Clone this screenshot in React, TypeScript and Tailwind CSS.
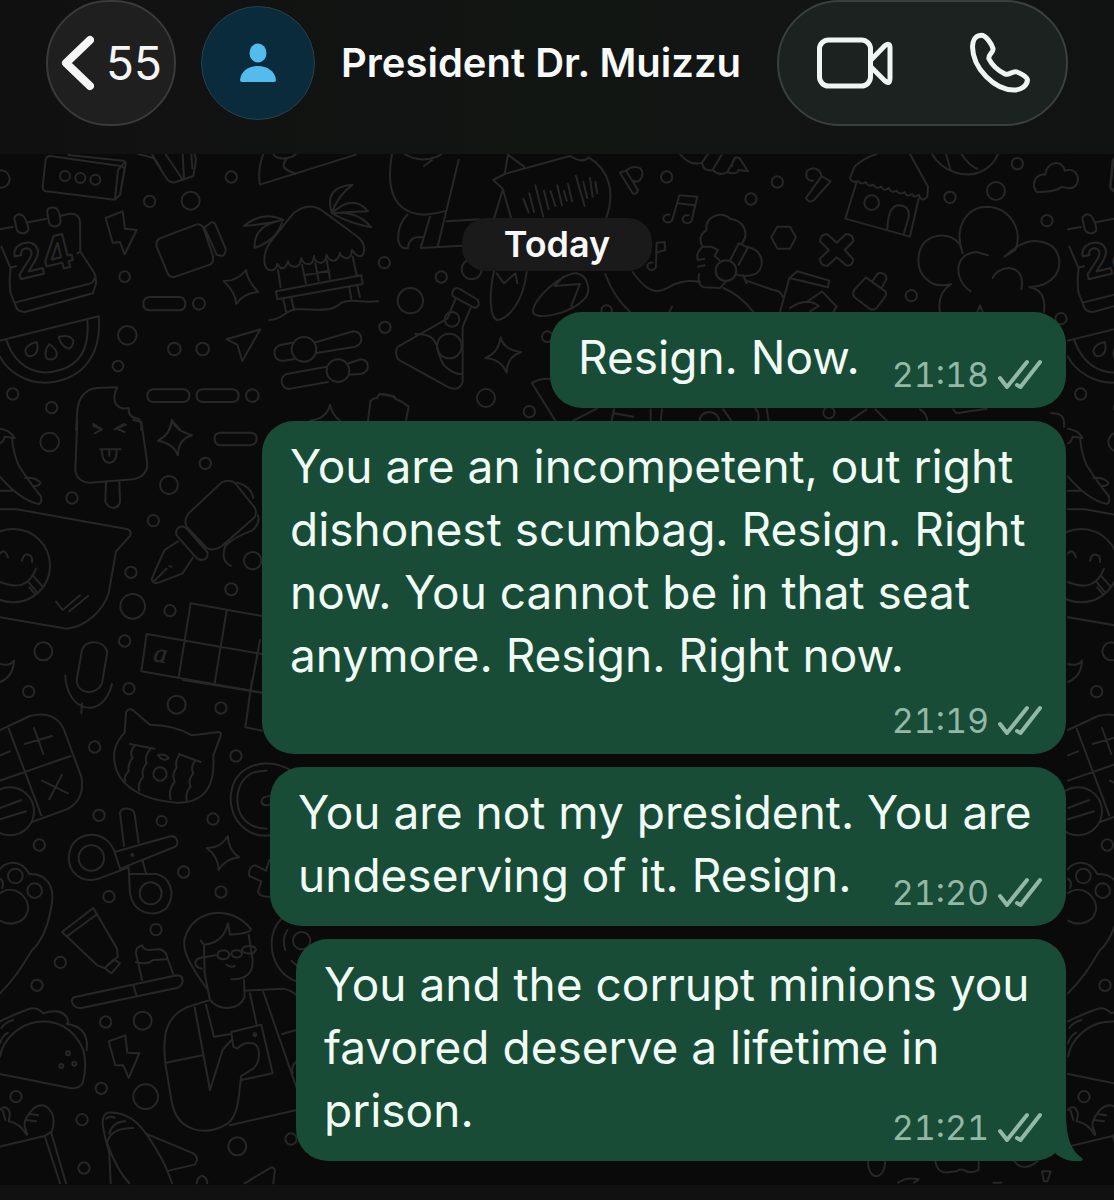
import type { ReactNode } from "react";

interface Message {
  id: number;
  text: string;
  time: string;
  width: string;
  /** Time drops to a row of its own below the text. */
  timeBelow?: boolean;
}

const MESSAGES: Message[] = [
  { id: 1, text: "Resign. Now.", time: "21:18", width: "w-[516px]" },
  {
    id: 2,
    text: "You are an incompetent, out right dishonest scumbag. Resign. Right now. You cannot be in that seat anymore. Resign. Right now.",
    time: "21:19",
    width: "w-[804px]",
    timeBelow: true,
  },
  {
    id: 3,
    text: "You are not my president. You are undeserving of it. Resign.",
    time: "21:20",
    width: "w-[796px]",
  },
  {
    id: 4,
    text: "You and the corrupt minions you favored deserve a lifetime in prison.",
    time: "21:21",
    width: "w-[770px]",
  },
];

type Dot = [number, number, number];

interface DoodlesProps {
  x: number;
  y: number;
  dots: Dot[];
  paths: string[];
  children?: ReactNode;
}

/** One patch of the wallpaper, drawn at three times its final size. */
function Doodles({ x, y, dots, paths, children }: DoodlesProps) {
  return (
    <g transform={`translate(${x} ${y}) scale(0.3333)`}>
      {dots.map(([cx, cy, r]) => (
        <circle key={`${cx}-${cy}`} cx={cx} cy={cy} r={r} />
      ))}
      {paths.map((d) => (
        <path key={d} d={d} />
      ))}
      {children}
    </g>
  );
}

function Wallpaper() {
  return (
    <svg
      aria-hidden="true"
      className="absolute inset-0 h-full w-full"
      fill="none"
      stroke="#272727"
      strokeWidth={6}
      strokeLinecap="round"
      strokeLinejoin="round"
    >
      <g transform="translate(0 -154)">
        <g id="doodle-tile">
          <Doodles
            x={0}
            y={150}
            dots={[
              [195, 78, 15], [241, 84, 15], [286, 89, 15],
              [449, 154, 17], [572, 152, 27], [694, 81, 17], [374, 380, 16],
              [597, 461, 18], [1153, 338, 17], [1155, 532, 17], [382, 556, 28],
              [523, 597, 19], [608, 597, 19], [354, 648, 16], [38, 732, 17],
              [155, 773, 17], [757, 737, 19], [912, 598, 37], [1014, 662, 34],
            ]}
            paths={[
              // long box
              "M150 18L362 48Q374 51 373 60L360 135L344 149L139 124Q127 122 128 110L137 28Q139 18 150 18ZM205 15L370 32Q378 34 377 42L360 135M345 148L354 60L373 38",
              "M415 12L460 24L503 90Q514 100 528 96L580 78L588 30L584 12M456 12L482 55M496 12L549 90M548 12L552 88M574 12L577 55",
              "M790 12Q772 60 780 104L1068 14M820 12Q830 30 862 24Q840 50 862 60L886 72M862 24Q880 22 888 12",
              // calendar
              "M0 238L38 231M84 217L140 206M182 197L210 191Q238 190 240 215L241 305L276 358Q292 380 287 405L278 430L75 486Q50 486 46 465L32 430Q26 400 32 355L4 290M34 352L48 349M232 310L241 305M44 458L265 402Q280 400 284 385",
              "M45 214C38 195 58 188 70 198C80 212 88 235 84 242C76 254 56 252 50 238ZM142 190C138 174 156 168 170 176C180 186 184 212 180 222C172 232 156 232 148 220Z",
              // bolts and sparks
              "M317 204L368 184L375 236L410 240L374 313L360 276L338 278Z",
              "M738 360Q742 392 775 426Q732 428 709 462Q706 425 671 393Q712 394 738 360Z",
              // camcorder
              "M478 266L590 223Q606 222 611 236L638 315Q644 336 630 344L526 380Q508 384 502 368L470 290Q467 274 478 266ZM613 232L636 216Q646 218 649 230L677 296Q678 312 668 318L650 314Z",
              "M448 441H538Q556 443 556 461T538 481H448Q430 479 430 461T448 441ZM460 718H550Q568 720 568 737T550 756H460Q442 754 442 737T460 718ZM608 718H698Q716 720 716 737T698 756H608Q590 754 590 737T608 718Z",
              // beach hut
              "M794 340Q788 300 824 260L880 190Q930 150 975 188L1070 258Q1100 280 1090 312Q1082 326 1066 312L1056 300Q1054 328 1036 324Q1022 320 1020 308Q1014 334 998 332Q982 328 980 314Q976 340 962 338Q944 338 942 318Q940 344 924 342Q908 342 904 324Q900 352 884 350Q868 350 864 334Q858 358 842 354L832 342Q828 364 808 360Q796 356 794 340",
              "M850 210Q790 180 732 228Q790 224 850 210Q760 224 764 294Q830 270 846 218M996 190Q970 110 1058 104Q1010 140 996 190Q1060 130 1104 184Q1050 186 996 190Q1070 180 1114 232Q1050 220 996 190",
              "M834 360L842 412M1058 320L1070 376M906 344L918 400M946 340L956 392M980 330L990 386M912 376L988 362M828 424L1084 376L1088 402L832 448ZM850 448L858 484M874 444L882 480M1048 412L1054 446M1072 406L1080 442M808 510C850 510 850 482 890 478C950 476 990 490 1024 458C1060 444 1070 460 1134 454",
              // melon slice
              "M0 572L296 499C306 600 260 680 160 696C80 708 20 660 0 620M18 568C50 660 120 680 180 660C250 640 268 580 262 510M110 576Q118 600 104 614Q80 628 76 602Q80 582 110 576ZM148 582Q174 600 170 618Q160 634 140 626Q130 606 148 582ZM176 560Q210 552 220 572Q220 590 206 596Q184 590 176 560Z",
              "M680 568L781 538L727 633L712 584Z",
              // sliders
              "M876 578L838 586Q820 594 824 614Q830 634 850 632L882 628M944 578L1060 544Q1084 546 1084 568Q1084 584 1066 590L946 610M980 650L860 672Q840 682 846 700Q852 720 872 716L984 696M1046 640L1082 628Q1104 630 1104 650Q1102 668 1082 672L1048 674",
              // popsicle, upper half
              "M228 840L232 780Q240 720 290 714L352 712Q338 740 346 760Q360 780 386 774Q384 802 414 806Q426 812 424 840M280 822L306 838M344 838L372 822M508 840L516 812L540 838",
              "M930 812Q980 806 990 765Q1000 800 1020 812",
              "M1104 812L1112 752Q1120 744 1132 744Q1134 730 1150 732L1180 738Q1186 750 1200 752",
            ]}
          >
            <text
              x={54}
              y={390}
              transform="rotate(-14 54 390)"
              className="font-['Inter',sans-serif] text-[140px] font-bold"
            >
              24
            </text>
          </Doodles>
          <Doodles
            x={0}
            y={420}
            dots={[
              [149, 66, 28], [616, 130, 17], [507, 195, 27], [216, 234, 17],
              [460, 302, 17], [393, 457, 17], [398, 559, 37], [510, 572, 17],
              [694, 508, 18], [758, 422, 26], [374, 663, 17], [130, 694, 27],
              [387, 806, 17], [86, 815, 17], [530, 854, 27], [40, 437, 110],
            ]}
            paths={[
              // popsicle, lower half
              "M232 0L226 150Q230 186 270 188L400 178Q442 170 442 130L424 6L400 0M280 18L306 28L284 40M378 14L350 26L374 36M300 88H362M306 90Q306 128 328 128Q350 128 350 90M328 92V108M318 188L316 244Q324 264 342 264Q362 258 360 240L358 184",
              "M0 26Q30 30 44 54L14 50M0 70Q10 66 14 50M36 54Q40 100 56 136Q90 190 122 228Q128 248 116 252Q60 240 0 170M0 212H40M76 174Q104 170 122 188Q118 200 100 198",
              "M516 0Q524 30 576 46Q534 58 534 106Q520 70 474 62Q510 46 516 0ZM662 38H752Q770 40 770 56T752 76H662Q644 74 644 56T662 38Z",
              // speech bubble with a face
              "M0 268H50L384 328Q396 334 390 348L348 394L326 520C310 570 260 620 200 626L0 592M0 400Q14 384 24 412M66 422Q72 396 90 406Q98 412 96 426M0 486Q80 520 108 446M84 484L110 516M98 466L128 500M88 502L106 524M168 545L188 570L240 526M208 574L264 528",
              // fountain pen
              "M566 280L664 188Q686 176 704 188L764 262Q772 280 764 292L666 378Q636 396 620 384L560 320Q550 300 566 280ZM532 326Q546 312 560 326L622 396Q626 418 606 420Q594 420 586 410L530 346Q526 334 532 326ZM534 364L494 390Q470 440 455 478Q460 492 476 488L548 460L578 414M464 482L500 446M508 438L514 440M712 188Q754 200 760 234M774 286Q782 310 756 332Q700 352 676 378Q660 420 692 438",
              // board
              "M572 550L786 588M440 642L786 702M424 754L786 818M440 642L424 754M572 550L536 772M680 572L644 790M780 660L752 812",
              // microphone
              "M246 690C254 660 310 656 322 696L306 790C290 826 232 826 230 780ZM196 766C200 880 310 900 336 792M246 850L244 880M0 732Q30 740 42 722Q40 770 0 786",
            ]}
          >
            <text
              x={458}
              y={724}
              strokeWidth={2}
              fill="#272727"
              transform="rotate(8 458 724)"
              className="font-['Liberation_Serif',serif] text-[80px] italic"
            >
              a
            </text>
          </Doodles>
          <Doodles
            x={0}
            y={680}
            dots={[
              [663, 84, 17], [284, 201, 17], [708, 228, 17], [297, 406, 17],
              [485, 423, 15], [639, 417, 17], [118, 495, 17], [551, 576, 17],
              [327, 650, 17], [663, 636, 17], [468, 749, 17], [274, 534, 38],
              [452, 640, 33], [46, 588, 22], [104, 632, 22], [30, 394, 72],
              [480, 282, 20], [397, 525, 3],
            ]}
            paths={[
              "M548 0L786 38M756 0L736 142L786 152",
              // calculator
              "M0 150L90 108Q160 90 190 144L244 290Q256 360 200 388L96 426M26 146L124 406M0 302L212 228M74 192L156 168M102 144L130 222M126 302L204 340M186 284L148 358M0 384L64 360M0 418L78 394M0 226L30 214",
              // crying cat
              "M374 158L378 96Q386 84 398 90L450 134Q520 134 576 166L656 156Q666 158 662 168L640 226C646 310 620 370 530 368C420 360 330 310 344 210Q352 180 374 158ZM390 192L464 206M406 196Q386 216 398 234Q382 254 386 274Q370 290 376 304M450 208Q432 230 440 250Q422 270 430 290Q412 312 418 332M536 222L602 246M540 224Q524 240 530 262Q514 284 524 306Q504 330 512 358M586 242Q570 260 580 280Q562 300 572 320Q556 336 560 360M474 226Q494 218 506 234Q492 248 474 226",
              // clock
              "M870 270C800 230 700 250 692 350C692 430 750 474 810 466M800 272C740 270 712 310 712 360C714 420 754 446 800 446M808 348Q786 350 784 366Q790 380 808 374",
              // scissors
              "M372 498L360 400Q362 384 384 386Q402 388 404 404L416 488M344 516L514 468Q534 470 532 492Q530 500 516 504L362 566M344 516C320 450 240 450 214 500C190 560 230 610 290 598L386 562M344 516L360 566M386 562L390 640C400 700 460 716 500 684C530 640 510 590 468 582H388M428 542L438 580",
              "M684 468Q684 510 718 532Q676 536 656 570Q656 530 620 504Q660 506 684 468ZM808 540L798 572L766 556Q744 560 748 588L784 604L774 636Q780 652 808 650",
              // paw
              "M0 568C10 548 60 530 88 582C140 580 170 620 152 690C140 760 110 800 96 810C60 870 40 900 0 940M0 640C40 610 90 650 84 690C76 730 30 740 0 722M0 596Q14 606 6 624",
            ]}
          />
          <Doodles
            x={0}
            y={900}
            dots={[
              [181, 187, 17], [111, 256, 17], [317, 366, 17], [428, 362, 27],
              [304, 565, 17], [437, 590, 37], [48, 590, 17], [246, 659, 17],
              [252, 804, 17], [712, 739, 27], [873, 717, 17], [204, 460, 6],
              [184, 498, 6], [223, 491, 6], [765, 404, 4], [905, 122, 26],
            ]}
            paths={[
              // toothpaste and brush
              "M280 24L186 96L292 196L314 204L354 170L350 144ZM202 108L292 42M314 204L342 178L360 190L334 220ZM426 240L408 160Q406 142 426 136Q430 150 448 150L480 148Q500 154 502 174L520 222M408 186Q440 196 460 180L500 178M222 292L530 226Q548 226 548 242Q546 260 530 264L244 324Q222 326 216 306Q214 296 222 292ZM400 256L410 288",
              // taco
              "M0 470C20 360 190 310 250 450Q262 500 248 550Q236 568 210 564L0 522M0 364Q50 340 80 330Q106 316 130 340Q160 330 180 336Q206 346 204 370M200 372Q268 380 260 450M4 384Q16 366 40 360M0 430Q6 408 24 398",
              "M326 424L376 406L382 458L418 460L386 534L370 496L346 496Z",
              // man with a phone
              "M624 270C580 210 540 150 556 110C580 30 690 10 752 86Q756 100 690 104L684 70Q670 130 612 134L602 122M612 136L614 220L630 300C660 336 720 330 734 290L732 240M694 238Q760 240 758 180L746 104M610 172Q580 176 588 196Q594 206 606 206M614 172L646 166M652 166C654 146 686 146 688 164C686 182 656 182 652 166ZM694 162C696 146 724 148 726 162C722 176 700 176 694 162ZM726 150C730 134 766 134 768 150C760 166 730 162 726 150M680 194Q690 204 704 198",
              "M624 302L560 322C500 350 486 400 496 490L514 600C530 700 620 710 684 670C720 640 716 570 724 528L760 506C786 480 780 430 756 430Q730 426 712 446L700 440L694 396L784 374L818 520L724 540M732 272L850 266Q880 274 890 286M584 322L630 570L668 450L694 420M618 314L642 410L692 402M750 280L770 374M790 276L890 564M498 488L608 466M846 402L890 390M690 676L890 630M890 484Q872 500 878 520",
              // glove on a board and rocket
              "M0 740L134 708L156 694Q172 640 136 618C100 606 70 660 74 680L82 704M90 642L114 646M80 660L108 664M0 630Q20 610 30 640L26 664Q60 670 80 704M134 708L180 850M154 700L198 850M8 632L16 660",
              "M332 850L328 760C306 680 300 650 322 638C400 630 440 700 470 750Q500 800 516 850M322 730Q350 810 388 850M322 726Q332 684 400 684M328 700Q340 664 376 664M318 656Q330 646 344 654M436 700L580 760Q600 776 584 794L506 812M734 850L814 802Q826 802 824 816L820 850M590 850Q594 826 608 828Q622 834 622 850",
              "M850 52C790 100 810 220 890 244M862 90Q844 120 856 150M874 182L890 196",
            ]}
          />
        </g>
        <use href="#doodle-tile" x={1068} />
        <Doodles x={0} y={150} dots={[[3, 87, 26]]} paths={[]} />
        <Doodles
          x={370}
          y={150}
          dots={[
            [214, 381, 17], [121, 452, 38], [348, 744, 27], [478, 785, 17],
            [890, 81, 17], [1143, 147, 17], [305, 358, 30], [246, 508, 22],
            [238, 588, 37], [710, 482, 16], [532, 560, 16], [1068, 362, 31],
            [1018, 816, 30],
          ]}
          paths={[
            "M66 12C50 100 60 190 164 194Q200 192 230 182M104 12Q140 34 180 26Q206 20 214 12M186 30L162 48M266 30L204 286M230 214L330 208M152 294L330 284M180 200L152 294M112 194Q84 220 84 270Q92 300 114 294Q116 268 138 262H160",
            // voice note
            "M414 14L404 72L370 90L398 116L424 206M414 14L462 50M404 72L600 18M398 120L372 206M600 18Q640 42 656 22C720 60 736 130 708 206M460 146L476 188M478 130L492 186M496 106L520 200M522 122L536 178M542 124L556 168M562 106L576 166M582 122L590 152M594 102L606 154M618 78L644 168M640 96L652 144M660 84L668 140M676 96L682 130",
            "M750 68L788 130Q800 136 804 120L768 62ZM768 62Q790 44 812 56Q824 72 810 90Q800 100 786 90",
            "M928 136L982 140L966 208M928 136L908 206M924 160L974 166M908 206A14 12 0 1 1 898 194M966 208A14 12 0 1 1 956 196M860 278L884 276L886 300L858 308M860 278L858 348A13 11 0 1 1 848 338",
            "M930 12Q960 50 996 38L1014 12M996 38Q1000 66 1028 60L1054 16M1028 60Q1050 80 1072 66L1096 24M1072 66Q1100 76 1106 60L1134 64L1110 26Q1090 12 1086 48",
            // flask
            "M252 418Q260 410 272 418L324 450Q332 470 314 474L250 440Q242 430 252 418ZM258 444L232 506L84 590Q72 606 84 628L236 712Q270 726 278 694V530L302 474M136 552C220 552 190 600 222 646Q250 674 278 672",
            "M392 562Q400 600 454 606Q412 618 410 668Q394 628 346 624Q386 608 392 562Z",
            "M372 364C356 440 360 500 380 510C410 510 460 460 470 366M380 370L402 400L436 370L442 400M490 490C480 450 580 366 620 370C660 380 664 430 640 450C600 490 510 510 490 490ZM554 408L630 402L604 468M580 380L554 408",
            // figure with a flower
            "M1010 240C1000 200 1060 180 1080 206C1120 210 1140 250 1116 280M1010 240Q980 260 998 290L1024 290L1044 300L1034 318L1048 330M998 290Q976 310 984 330L1004 326M984 350L1004 346M988 372Q980 400 1000 412L1050 414Q1064 400 1068 394M1080 332L1106 280L1134 292L1106 344M1134 292C1180 300 1186 350 1160 370Q1130 384 1100 374M1120 376L1130 400M706 372Q730 440 780 486M788 366C840 440 870 430 910 404C950 390 970 392 990 396M1060 414C1100 430 1130 460 1150 486M898 486L906 470",
            "M90 752L116 770L108 812M30 732L74 740Q76 750 90 752M486 700Q500 686 540 686M486 700L556 812M610 812L680 776M724 816L732 778M732 790L790 800M842 814V778M872 814L876 778M1060 778L1084 812",
          ]}
        />
        <Doodles
          x={740}
          y={150}
          dots={[
            [112, 96, 17], [395, 158, 22], [630, 142, 17],
            [832, 41, 17], [768, 123, 27], [921, 212, 17], [514, 437, 17],
            [963, 506, 17], [267, 788, 17],
          ]}
          paths={[
            "M200 82C190 50 240 44 244 78L272 94L222 150Q206 162 198 144L242 82M200 82Q206 94 220 92",
            // shop
            "M410 12Q370 24 344 50L330 84Q336 100 356 94Q364 106 378 96Q384 112 400 104Q408 120 424 110Q432 126 446 114Q454 132 470 122Q478 136 494 126Q500 144 516 132Q524 146 536 134Q546 160 562 140L564 110L510 12M350 96L316 206L510 260L536 146M442 238Q444 170 474 166Q510 166 506 200L492 250",
            "M576 12C610 70 680 84 720 66Q760 50 774 12M618 12L632 60M664 12Q690 50 712 56",
            "M890 126C870 100 890 70 916 74C920 30 970 30 974 62C1010 50 1026 90 1004 110Q990 120 966 110C950 124 920 126 890 126Z",
            "M112 230H150L168 262L150 296H112L94 262Z",
            "M262 252L290 278L318 252Q340 252 340 274L314 300L340 328Q338 350 318 346L290 322L262 348Q240 346 240 326L266 300L240 274Q242 252 262 252Z",
            "M120 486L148 384L172 364L268 392L264 412L164 388M148 384L164 388M150 474Q200 440 236 468L210 484M200 456L246 424L290 470L280 486M18 392L100 420Q120 420 128 440",
            "M378 382L436 424Q442 434 434 442L410 474Q396 484 386 474L344 442Q334 430 344 418ZM398 392L414 370Q436 366 440 386L424 416",
            // tree
            "M668 310C640 230 680 170 744 170C810 174 850 240 826 300L794 320Q850 266 894 274C960 280 970 340 946 376Q920 410 868 412Q920 420 912 486M668 310C660 240 560 240 540 300C520 370 570 420 634 402Q590 430 600 486M692 424C640 390 640 310 710 306L744 316M758 384C780 340 860 340 844 418M712 486L720 466L728 486",
            "M1118 30L1110 112L1122 120M46 776Q60 790 54 812M80 776L86 812M330 812L380 778M406 778L440 812M540 778Q560 790 562 812M640 778L650 790L740 776M934 790Q976 786 972 830",
          ]}
        />
        <Doodles
          x={860}
          y={1060}
          dots={[]}
          paths={[
            "M24 300C24 370 76 360 76 300M226 300Q230 344 270 336L290 334Q300 326 312 330Q330 344 356 330V300M460 300Q490 340 532 304M114 368Q140 350 176 358L162 368M546 334L572 334L562 364H552ZM400 368H424",
          ]}
        />
      </g>
    </svg>
  );
}

function DoubleCheck() {
  return (
    <svg
      width="45"
      height="32"
      viewBox="0 0 45 32"
      fill="none"
      stroke="currentColor"
      strokeWidth={4}
      strokeLinecap="round"
      strokeLinejoin="round"
      role="img"
      aria-label="Delivered"
    >
      <path d="M3 19L10 28L30 3" />
      <path d="M20 26L23.500 28L43 3" />
    </svg>
  );
}

function Bubble({ message, last }: { message: Message; last: boolean }) {
  return (
    <li
      className={`relative max-w-full rounded-[32px] bg-[#184c37] pt-[14px] pr-6 pb-[13px] pl-7 ${message.width}`}
    >
      <p className="flow-root text-[46px] leading-[63px] text-[#f1fbf5]">
        {message.text}
        <span
          className={`float-right flex items-center gap-2 text-[#92b8a6] ${
            message.timeBelow ? "mt-[14px]" : "mt-[29px]"
          }`}
        >
          <time className="text-[34px] leading-10 tabular-nums">
            {message.time}
          </time>
          <DoubleCheck />
        </span>
      </p>
      {last && (
        <svg
          aria-hidden="true"
          className="absolute -right-5 bottom-0"
          width="40"
          height="50"
          viewBox="0 0 40 50"
          fill="#184c37"
        >
          <path d="M0 0H20C20 22 23 38 36 47Q38 50 34 50C24 51 16 48 10 43L0 30Z" />
        </svg>
      )}
    </li>
  );
}

export default function App() {
  return (
    <div className="flex min-h-screen flex-col bg-[#0a0a0a] font-['Inter',sans-serif]">
      {/* Header */}
      <header className="flex items-center bg-linear-to-r from-[#101010] via-[#121613] to-[#111313] pr-[46px] pb-7 pl-[46px]">
        <button
          aria-label="Back, 55 unread"
          className="flex h-[126px] w-[130px] shrink-0 items-center justify-center gap-3 rounded-full border-2 border-[#3a3a3a] bg-[#1f1f1f] text-[#f5f5f5]"
        >
          <svg
            width="34"
            height="58"
            viewBox="0 0 34 58"
            fill="none"
            stroke="currentColor"
            strokeWidth={8}
            strokeLinecap="round"
            strokeLinejoin="round"
          >
            <path d="M30 6L6 29L30 52" />
          </svg>
          <span className="text-[46px]">55</span>
        </button>

        <div className="ml-[25px] flex h-[114px] w-[114px] shrink-0 items-center justify-center rounded-full border border-[#28404a] bg-[#0a2b3c]">
          <svg width="36" height="40" viewBox="0 0 36 40" fill="#54bbed">
            <ellipse cx="18" cy="10" rx="8.500" ry="9.500" />
            <path d="M2 39Q0 39 0 37C1 28 9 23 18 23S35 28 36 37Q36 39 34 39Z" />
          </svg>
        </div>

        <h1 className="ml-[26px] flex-1 text-[40px] font-semibold whitespace-nowrap text-[#f8faf9]">
          President Dr. Muizzu
        </h1>

        <div className="flex h-[126px] w-[291px] shrink-0 items-center justify-between rounded-full border-2 border-[#39413f] bg-[#1b2220] pr-[34px] pl-9 text-[#eef5f2]">
          <button aria-label="Video call">
            <svg
              width="80"
              height="56"
              viewBox="0 0 80 56"
              fill="none"
              stroke="currentColor"
              strokeWidth={5}
              strokeLinejoin="round"
            >
              <rect x="4.500" y="5" width="51" height="46" rx="9" />
              <path d="M56 25L70 10.500Q75 7 75 13V43Q75 50 70 46L56 32" />
            </svg>
          </button>
          <button aria-label="Voice call">
            <svg
              width="64"
              height="64"
              viewBox="968 32 64 64"
              fill="none"
              stroke="currentColor"
              strokeWidth={5}
              strokeLinejoin="round"
            >
              <path d="M980 36.500C975 37 972.500 42 972.500 48C973 70 995 91 1014 91C1021 91 1027 87 1027.500 81C1027.500 78 1020 74 1017 73C1013 71 1009 77 1005 75C999 72 992 66 989 60C987.500 56 994 53 993 49.500C992 46 986 35 980 36.500Z" />
            </svg>
          </button>
        </div>
      </header>

      {/* Conversation */}
      <main className="relative flex flex-1 flex-col items-center overflow-hidden pt-16 pr-12 pb-6 pl-12">
        <Wallpaper />
        <h2 className="relative rounded-[24px] bg-[#1a1a1a] px-[42px] text-[36px] leading-[53px] font-semibold text-[#f8f8f8]">
          Today
        </h2>
        <ol className="mt-[41px] flex w-full flex-col items-end gap-[13px]">
          {MESSAGES.map((message, i) => (
            <Bubble
              key={message.id}
              message={message}
              last={i === MESSAGES.length - 1}
            />
          ))}
        </ol>
      </main>

      <footer className="h-4 bg-[#111111]" />
    </div>
  );
}
